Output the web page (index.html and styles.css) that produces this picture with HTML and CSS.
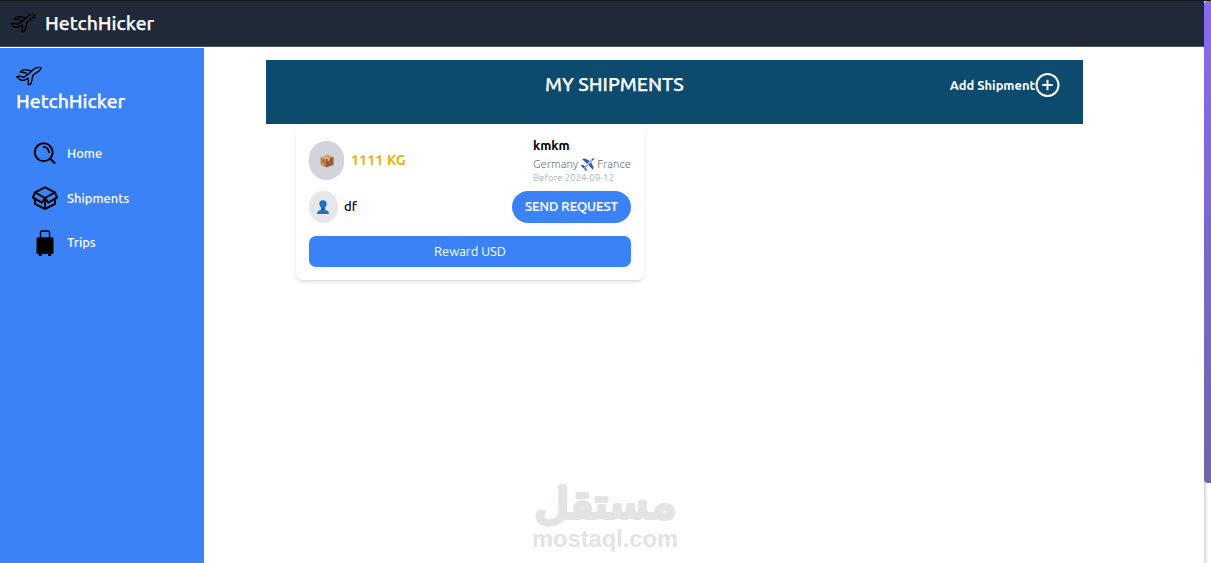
FILE: index.html
```html
<!DOCTYPE html>
<html lang="en">
<head>
    <meta charset="UTF-8">
    <meta name="viewport" content="width=device-width, initial-scale=1.0">
    <title>HetchHicker</title>
    <link rel="stylesheet" href="styles.css">
</head>
<body>
    <svg class="defs" aria-hidden="true">
        <symbol id="plane" viewBox="0 0 26 20">
            <path d="M.8 10.8L3.6 10.2L7.6 11.4L12.6 8L18.6 2.6Q22 .8 24.8 1.7Q25.4 3.4 22.8 5.2L17 9.2L15.8 14.5L14.9 17.8L12.4 18.8L12.2 12.2L8.6 14Q5.6 15 3.6 13.4Z M11.4 8.2L9.4 6.6L4.2 6L6 4.4L9 3.6L15.8 5" fill="none" stroke="currentColor" stroke-width="1.4" stroke-linejoin="round"/>
        </symbol>
    </svg>

    <div class="page">
        <header class="navbar">
            <svg class="plane"><use href="#plane"/></svg>
            <span class="brand">HetchHicker</span>
        </header>

        <div class="layout">
            <aside class="sidebar">
                <svg class="plane"><use href="#plane"/></svg>
                <span class="brand">HetchHicker</span>
                <nav class="menu">
                    <a class="menu-item">
                        <svg class="menu-icon" viewBox="0 0 26 28">
                            <g fill="none" stroke="currentColor" stroke-width="2" stroke-linecap="round">
                                <circle cx="11.7" cy="13.3" r="9"/>
                                <path d="M11.5 7.8a5.2 5.2 0 0 1 5.3 5.4" stroke-width="1.8"/>
                                <path d="M18.2 19.8l4.4 4.2" stroke-width="2.2"/>
                            </g>
                        </svg>
                        <span class="menu-text">Home</span>
                    </a>
                    <a class="menu-item">
                        <svg class="menu-icon" viewBox="0 0 26 28">
                            <g fill="none" stroke="currentColor" stroke-width="2" stroke-linejoin="round">
                                <path d="M13 3.3L23 8.3L25 13.6L23 14.8V19.8L13 25L3 19.8V14.8L1 13.6L3 8.3Z"/>
                                <path d="M3 8.3L13 14L23 8.3M13 14V25M1 13.6L9.8 18.6L13 14L16.2 18.6L25 13.6"/>
                            </g>
                        </svg>
                        <span class="menu-text">Shipments</span>
                    </a>
                    <a class="menu-item">
                        <svg class="menu-icon" viewBox="0 0 26 28">
                            <path d="M8.5 10V4.5q0-1.5 1.5-1.5h6q1.5 0 1.5 1.5V10" fill="none" stroke="currentColor" stroke-width="1.4"/>
                            <path d="M6 9.3h14q1.5 0 1.5 1.5v14q0 1.3-1.5 1.3h-.8v1.9h-3v-1.9H9.8v1.9h-3v-1.9H6q-1.5 0-1.5-1.3V10.8q0-1.5 1.5-1.5z" fill="currentColor"/>
                        </svg>
                        <span class="menu-text">Trips</span>
                    </a>
                </nav>
            </aside>

            <main class="content">
                <div class="banner">
                    <h1 class="title">MY SHIPMENTS</h1>
                    <a class="add">
                        <span class="add-text">Add Shipment</span>
                        <svg class="add-icon" viewBox="0 0 24 24" fill="none" stroke="currentColor" stroke-width="2">
                            <circle cx="12" cy="12" r="11"/>
                            <path d="M12 6.8v10.4M6.8 12h10.4"/>
                        </svg>
                    </a>
                </div>

                <section class="card">
                    <div class="row top">
                        <div class="group">
                            <span class="avatar package">
                                <svg class="package-icon" viewBox="0 0 14 14">
                                    <path d="M.5 3.5L6 5v8.6L.8 11Z" fill="#b97850"/>
                                    <path d="M6 5l7.5-2v8L6 13.6Z" fill="#965b37"/>
                                    <path d="M.5 3.5L7.5.5l6 2.5L6 5.2Z" fill="#d99b6c"/>
                                    <path d="M2.8 2.5L9.5 4.3v2.2l-1.8.5V4.6L2 3Z" fill="#edc59a"/>
                                    <path d="M1.5 9l2.8 1.2v1.5L1.5 10.4Z" fill="#e9ad32"/>
                                </svg>
                            </span>
                            <span class="weight">1111 KG</span>
                        </div>
                        <div class="details">
                            <span class="name">kmkm</span>
                            <span class="route">
                                <span class="from">Germany</span>
                                <svg class="route-plane" viewBox="0 0 14 14">
                                    <path d="M1 2l3-.5 5 2.5-2.7 3ZM10 5l2.5 5-.5 3-5-5.5Z" fill="#315b9f"/>
                                    <path d="M0 8l3 .3L4.8 10l1 4-1 .0-2-2.6L0 9Z" fill="#315b9f"/>
                                    <path d="M3 10.3L9.8 2.8Q12 .6 13.7.3q0 1.8-2.2 4L4.3 11.6Q2 12.2 3 10.3Z" fill="#9db0c7"/>
                                    <path d="M10.6 2.3l1.3 1.3 1-1.6Z" fill="#26456f"/>
                                </svg>
                                <span class="to">France</span>
                            </span>
                            <span class="date">Before 2024-09-12</span>
                        </div>
                    </div>
                    <div class="row">
                        <div class="group">
                            <span class="avatar person">
                                <svg class="person-icon" viewBox="0 0 14 14">
                                    <path d="M1 14q0-3 2.5-3.7L5.3 9.6V8Q3.4 6.7 3.3 3.8Q3.4.2 7 .2t3.7 3.6Q10.6 6.7 8.7 8v1.6l1.8.7Q13 11 13 14Z" fill="#246fc2"/>
                                    <path d="M5.3 8Q7 9.2 8.7 8v1.5Q7 10.8 5.3 9.5Z" fill="#16559d"/>
                                </svg>
                            </span>
                            <span class="user">df</span>
                        </div>
                        <button class="send">SEND REQUEST</button>
                    </div>
                    <div class="reward">Reward USD</div>
                </section>
            </main>
        </div>
    </div>

    <div class="scrollbar"><div class="thumb"></div></div>

    <svg class="watermark" viewBox="0 0 150 70">
        <text class="mark-ar" x="75.5" y="33" text-anchor="middle" textLength="142" lengthAdjust="spacingAndGlyphs">مستقل</text>
        <text class="mark-en" x="2" y="62" textLength="146" lengthAdjust="spacingAndGlyphs">mostaql.com</text>
    </svg>
</body>
</html>
```
FILE: styles.css
```css
* {
    box-sizing: border-box;
}
body {
    margin: 0;
    height: 563px;
    display: flex;
    overflow: hidden;
    position: relative;
    background-color: #fff;
    font-family: Ubuntu, "Noto Sans", sans-serif;
    font-size: 13px;
}
svg {
    display: block;
    flex: none;
}
.defs {
    display: none;
}
.page {
    flex: 1;
    display: flex;
    flex-direction: column;
}
.navbar {
    height: 47px;
    flex: none;
    display: flex;
    align-items: center;
    gap: 9px;
    padding: 0 0 1px 10px;
    border-top: 1px solid #171717;
    border-bottom: 1px solid #4b5563;
    background-color: #1f2937;
}
.plane {
    width: 26px;
    height: 20px;
    color: #000;
}
.brand {
    color: #fff;
    font-size: 19.4px;
    font-weight: 500;
    line-height: 28px;
    -webkit-text-stroke: 0.25px #fff;
}
.layout {
    flex: 1;
    display: flex;
    padding-top: 1px;
}
.sidebar {
    width: 204px;
    padding: 18px 16px;
    background-color: #3b82f6;
}
.sidebar .brand {
    display: block;
    margin-top: 1px;
}
.menu {
    display: flex;
    flex-direction: column;
    gap: 16.5px;
    padding: 24px 0 0 16px;
}
.menu-item {
    display: flex;
    align-items: center;
    gap: 9px;
    color: #000;
}
.menu-icon {
    width: 26px;
    height: 28px;
}
.menu-text {
    color: #fff;
    font-size: 12.9px;
    font-weight: 500;
}
.content {
    flex: 1;
    padding: 12px 121px 0 62px;
}
.banner {
    height: 64px;
    display: flex;
    align-items: flex-start;
    gap: 11px;
    padding: 13px 23px 0 24px;
    background-color: #0c4a6e;
    color: #fff;
}
.title {
    flex: 1;
    margin: 0;
    font-size: 19.4px;
    font-weight: 500;
    line-height: 22px;
    text-align: center;
    -webkit-text-stroke: 0.25px #fff;
}
.add {
    display: flex;
    align-items: center;
    font-size: 12.9px;
    font-weight: 600;
}
.add-icon {
    width: 25px;
    height: 24px;
}
.card {
    width: 348px;
    height: 156px;
    margin-left: 30px;
    padding: 13px;
    border-radius: 7px;
    background-color: #fff;
    box-shadow: 0 3px 5px -1px rgba(0, 0, 0, 0.12), 0 2px 3px -2px rgba(0, 0, 0, 0.12);
}
.row {
    display: flex;
    justify-content: space-between;
    align-items: center;
}
.row.top {
    height: 47px;
    margin-bottom: 7px;
}
.group {
    display: flex;
    align-items: center;
    gap: 7px;
}
.avatar {
    display: flex;
    align-items: center;
    justify-content: center;
    border-radius: 20px;
}
.package {
    width: 35px;
    height: 39px;
    background-color: #d1d5db;
}
.top .group {
    align-self: flex-start;
    margin-top: 4px;
}
.package-icon,
.person-icon,
.route-plane {
    width: 14px;
    height: 14px;
}
.weight {
    padding-bottom: 2px;
    color: #eab308;
    font-weight: 600;
    font-size: 14.4px;
}
.details {
    display: flex;
    flex-direction: column;
    width: 98px;
    white-space: nowrap;
}
.name {
    font-weight: 600;
    font-size: 12.9px;
    line-height: 17px;
}
.route {
    display: flex;
    align-items: center;
    justify-content: space-between;
    margin-top: 2px;
    color: #6b7280;
    font-size: 11.4px;
    font-weight: 300;
    line-height: 16px;
}
.date {
    color: #9ca3af;
    font-size: 9.7px;
    font-weight: 300;
    line-height: 12px;
}
.person {
    width: 29px;
    height: 32px;
    background-color: #e5e7eb;
}
.person-icon {
    margin-right: 1px;
}
.user {
    margin-left: -1px;
    padding-bottom: 2px;
    font-weight: 500;
}
.send {
    width: 119px;
    height: 32px;
    padding: 0 0 2px;
    border: none;
    border-radius: 16px;
    background-color: #3b82f6;
    color: #fff;
    font: 500 13px/30px Ubuntu, "Noto Sans", sans-serif;
    -webkit-text-stroke: 0.2px #fff;
}
.reward {
    height: 31px;
    margin-top: 13px;
    border-radius: 7px;
    background-color: #3b82f6;
    color: #fff;
    font-size: 12.9px;
    text-align: center;
    line-height: 31px;
}
.scrollbar {
    width: 7px;
    border-top: 1px solid #171717;
    background: linear-gradient(to right, #d5d5da, #fff 4px);
}
.thumb {
    height: 482px;
    border-radius: 4px 0 0 4px;
    background: linear-gradient(#8b68f2, #6b66ad);
}
/* watermark sits over the page */
.watermark {
    position: absolute;
    left: 530px;
    top: 485px;
    width: 150px;
    height: 70px;
    overflow: visible;
    fill: #e4e4e4;
}
.mark-ar {
    font: 42px "DejaVu Sans", sans-serif;
    stroke: #e4e4e4;
    stroke-width: 4px;
    stroke-linejoin: round;
}
.mark-en {
    font: bold 24px "Liberation Sans", sans-serif;
}
```
